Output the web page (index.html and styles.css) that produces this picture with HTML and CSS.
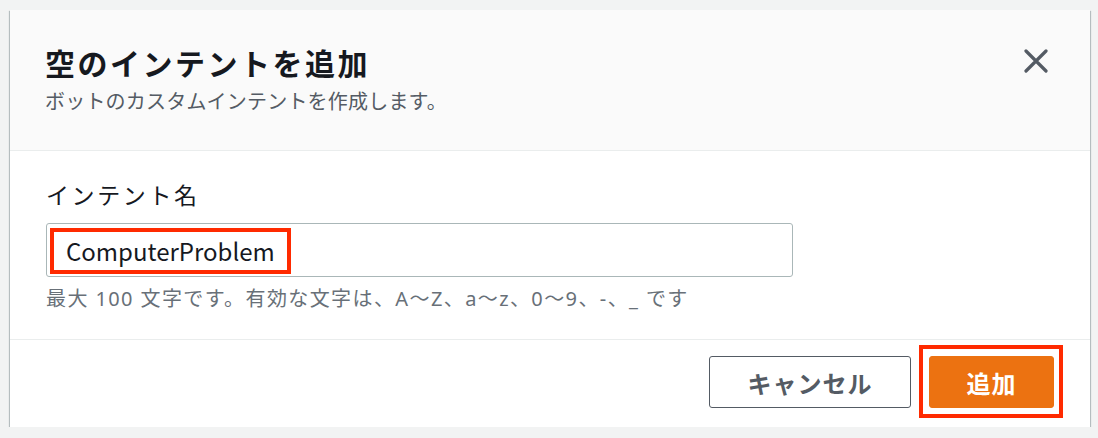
FILE: index.html
```html
<!DOCTYPE html>
<html lang="ja">
<head>
<meta charset="utf-8">
<title>空のインテントを追加</title>
<link rel="stylesheet" href="styles.css">
</head>
<body>
<div class="dialog">
  <div class="header">
    <div class="titles">
      <h2 class="title">空のインテントを追加</h2>
      <p class="subtitle">ボットのカスタムインテントを作成します。</p>
    </div>
    <button class="close" aria-label="閉じる">
      <svg width="24" height="24" viewBox="0 0 24 24"><path d="M2 2 L22 22 M22 2 L2 22" stroke="#545b64" stroke-width="3.2" stroke-linecap="round" fill="none"/></svg>
    </button>
  </div>
  <div class="body">
    <label class="label">インテント名</label>
    <div class="input"><span class="value">ComputerProblem</span></div>
    <p class="hint">最大 100 文字です。有効な文字は、A〜Z、a〜z、0〜9、-、_ です</p>
  </div>
  <div class="footer">
    <button class="btn btn-cancel">キャンセル</button>
    <button class="btn btn-primary">追加</button>
  </div>
</div>
</body>
</html>
```
FILE: styles.css
```css
* { box-sizing: border-box; }
html, body { margin: 0; }
body {
  background: #f2f3f3;
  padding: 10px 8px 0 10px;
  font-family: "Noto Sans CJK JP", "Noto Sans", sans-serif;
  color: #16191f;
}
.dialog {
  width: 1080px;
  height: 417px;
  background: #fff;
  display: flex;
  flex-direction: column;
  box-shadow: 0 1px 1px 0 rgba(0,28,36,.35), 1px 1px 1px 0 rgba(0,28,36,.2), -1px 1px 1px 0 rgba(0,28,36,.2);
}
.header {
  height: 141px;
  background: #fafafa;
  border-bottom: 1px solid #eaeded;
  display: flex;
  justify-content: space-between;
  align-items: flex-start;
  padding: 34px 42px 0 35px;
}
.title {
  margin: 0;
  font-size: 30px;
  line-height: 36px;
  font-weight: 700;
  letter-spacing: 2.5px;
}
.subtitle {
  margin: 7px 0 0;
  font-size: 20px;
  line-height: 28px;
  letter-spacing: 0.2px;
  color: #545b64;
}
.close {
  margin-top: 5px;
  width: 24px;
  height: 24px;
  padding: 0;
  border: 0;
  background: none;
  display: flex;
}
.body {
  height: 189px;
  border-bottom: 1px solid #eaeded;
  padding: 28px 0 0 36px;
  display: flex;
  flex-direction: column;
  align-items: flex-start;
}
.label {
  font-size: 23px;
  line-height: 30px;
  letter-spacing: 2.6px;
}
.input {
  margin-top: 14px;
  width: 747px;
  height: 54px;
  border: 1px solid #aab7b8;
  border-radius: 3px;
  padding: 4px 0 0 3px;
}
.value {
  display: inline-block;
  height: 46px;
  border: 4px solid #ff2a00;
  padding: 0 12px;
  font-size: 24px;
  line-height: 38px;
}
.hint {
  margin: 9px 0 0;
  font-family: "Noto Sans", "Noto Sans CJK JP", sans-serif;
  font-size: 20px;
  line-height: 26px;
  letter-spacing: 1.4px;
  color: #687078;
}
.footer {
  flex: 1;
  display: flex;
  justify-content: flex-end;
  align-items: flex-start;
  gap: 18px;
  padding: 16px 36px 0 0;
}
.btn {
  height: 52px;
  border-radius: 3px;
  font-family: inherit;
  font-size: 24px;
  font-weight: 700;
  letter-spacing: 1px;
  cursor: pointer;
}
.btn-cancel {
  width: 202px;
  background: #fff;
  border: 1px solid #545b64;
  color: #545b64;
}
.btn-primary {
  position: relative;
  width: 125px;
  background: #ec7211;
  border: 1px solid #ec7211;
  color: #fff;
}
.btn-primary::after {
  content: "";
  position: absolute;
  top: -12px;
  left: -11px;
  right: -10px;
  bottom: -11px;
  border: 4px solid #ff2a00;
}
```
